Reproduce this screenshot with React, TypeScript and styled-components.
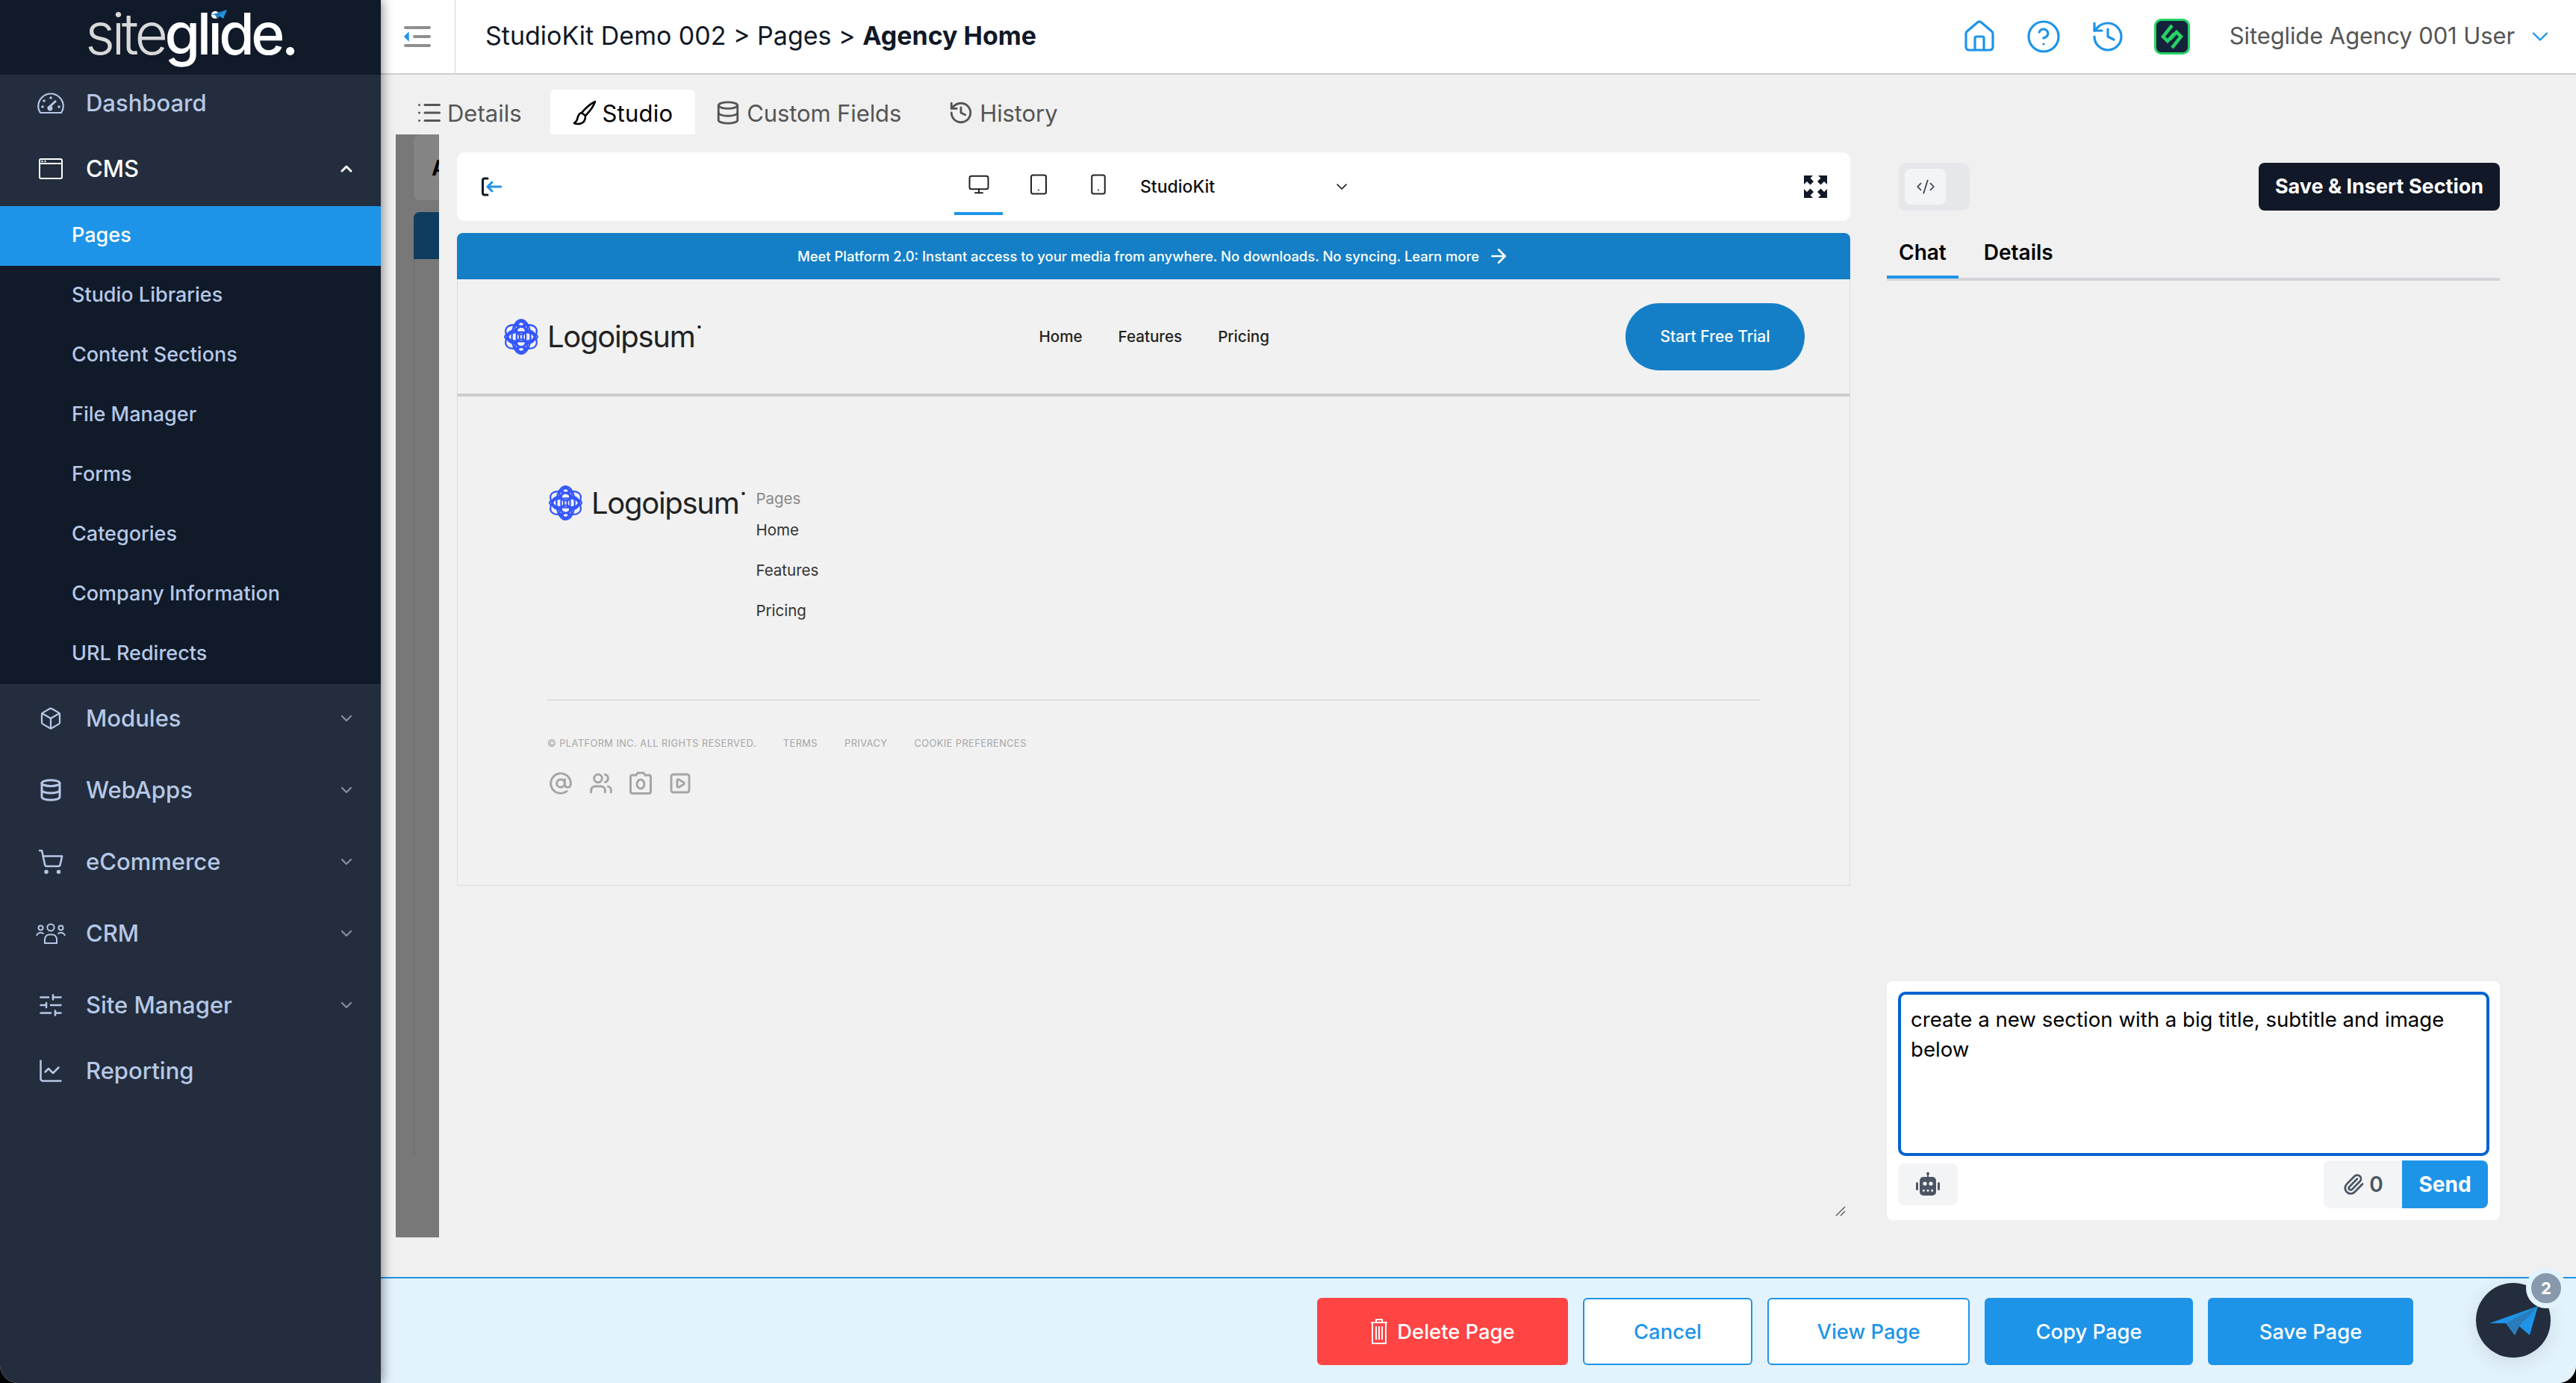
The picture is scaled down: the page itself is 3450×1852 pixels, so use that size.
import React from 'react'
import styled, { createGlobalStyle } from 'styled-components'
import {
    ArrowRight, AtSign, Box, ChartLine, ChevronDown, ChevronUp, CircleHelp, CodeXml, Database,
    History, Home, List, Monitor, Paperclip, ShoppingCart, SlidersHorizontal,
    Smartphone, SquarePlay, Tablet, Users
} from 'lucide-react'

const FONT = `Inter, "Liberation Sans", sans-serif`

const GlobalStyle = createGlobalStyle`
    html, body {
        margin: 0;
        padding: 0;
        background: #000;
    }
    * {
        box-sizing: border-box;
    }
`

const GaugeIcon = () => (
    <svg width="36" height="28" viewBox="0 0 36 28" fill="none" stroke="currentColor" strokeWidth="2.2">
        <path d="M4 27C2 24 1.2 21.5 1.2 18.5C1.2 9 8.8 1.5 18 1.5C27.2 1.5 34.8 9 34.8 18.5C34.8 21.5 34 24 32 27Z" />
        <path d="M14 21L25 11" strokeWidth="3" />
        <circle cx="17" cy="21" r="3.4" fill="currentColor" stroke="none" />
        <g fill="currentColor" stroke="none">
            <circle cx="18" cy="7" r="1.8" />
            <circle cx="9" cy="11" r="1.8" />
            <circle cx="7" cy="19" r="1.8" />
            <circle cx="29" cy="19" r="1.8" />
        </g>
    </svg>
)

const WindowIcon = () => (
    <svg width="32" height="28" viewBox="0 0 32 28" fill="none" stroke="currentColor" strokeWidth="2">
        <rect x="1" y="1" width="30" height="26" rx="2" />
        <path d="M1 7H31" />
        <circle cx="4.5" cy="4" r="1.2" fill="currentColor" stroke="none" />
        <circle cx="8.5" cy="4" r="1.2" fill="currentColor" stroke="none" />
    </svg>
)

const TeamIcon = () => (
    <svg width="40" height="28" viewBox="0 0 40 28" fill="none" stroke="currentColor" strokeWidth="2">
        <circle cx="20" cy="6" r="4.6" />
        <circle cx="6.5" cy="6.5" r="3" />
        <circle cx="33.5" cy="6.5" r="3" />
        <path d="M12 27V22C12 18 15 15.5 18 15.5H22C25 15.5 28 18 28 22V27Z" />
        <path d="M1 17C2 14 4 13 6.5 13C8 13 9.5 13.5 10.5 14.5" />
        <path d="M39 17C38 14 36 13 33.5 13C32 13 30.5 13.5 29.5 14.5" />
    </svg>
)

const BrushIcon = () => (
    <svg width="32" height="34" viewBox="0 0 32 34" fill="none" stroke="currentColor" strokeWidth="2.6" strokeLinejoin="round">
        <path d="M30 2C28 8 22 16 17 21L12 17C17 11 24 5 30 2Z" />
        <path d="M12 17C7 18 7 23 6 26C5 29 3 30 2 31C7 33 14 32 16 27C17 25 17 23 17 21" />
    </svg>
)

const CameraIcon = () => (
    <svg width="30" height="32" viewBox="0 0 30 32" fill="none" stroke="currentColor" strokeWidth="3">
        <path d="M9 5L11 2H19L21 5H26C27.5 5 28.5 6 28.5 7.5V27C28.5 28.5 27.5 29.5 26 29.5H4C2.5 29.5 1.5 28.5 1.5 27V7.5C1.5 6 2.5 5 4 5Z" />
        <ellipse cx="15" cy="17" rx="5" ry="6" />
    </svg>
)

const TrashIcon = () => (
    <svg width="24" height="36" viewBox="0 0 24 36" fill="none" stroke="currentColor" strokeWidth="2">
        <path d="M1 6H23M8 6V2H16V6" />
        <path d="M3 6V34H21V6" />
        <path d="M8 11V29M12 11V29M16 11V29" />
    </svg>
)

const RobotIcon = () => (
    <svg width="34" height="34" viewBox="0 0 34 34" fill="#4b5563">
        <rect x="16" y="1" width="2" height="6" />
        <circle cx="17" cy="2.5" r="2" />
        <rect x="6" y="7" width="22" height="25" rx="5" />
        <rect x="1" y="14" width="3" height="11" rx="1.5" />
        <rect x="30" y="14" width="3" height="11" rx="1.5" />
        <circle cx="13" cy="16" r="2.6" fill="#f3f4f6" />
        <circle cx="21" cy="16" r="2.6" fill="#f3f4f6" />
        <g fill="#f3f4f6">
            <rect x="10" y="24" width="2.6" height="2.6" />
            <rect x="15.7" y="24" width="2.6" height="2.6" />
            <rect x="21.4" y="24" width="2.6" height="2.6" />
        </g>
    </svg>
)

const SiteglideLogo = () => (
    <LogoWrap>
        <LogoLight>site</LogoLight>
        <LogoBold>glide.</LogoBold>
        <LogoPlane width="22" height="14" viewBox="0 0 22 14">
            <polygon points="22,0 0,7 6,7 9,12 11,8 17,12" fill="#1e94e8" />
            <polygon points="22,0 6,7 9,12 11,8" fill="#2a7cba" />
        </LogoPlane>
    </LogoWrap>
)

const LogoMark: React.FunctionComponent<{ size: number }> = ({ size }) => (
    <svg width={size} height={size} viewBox="0 0 48 48" fill="none" stroke="#3355ff" strokeWidth="2.2">
        {[0, 60, 120].map(a => (
            <ellipse key={a} cx="24" cy="24" rx="22" ry="12" transform={`rotate(${a + 30} 24 24)`} />
        ))}
        {[0, 90].map(a => (
            <ellipse key={a} cx="24" cy="24" rx="21" ry="6" transform={`rotate(${a} 24 24)`} />
        ))}
        <circle cx="24" cy="13" r="8" />
        <circle cx="24" cy="35" r="8" />
        <circle cx="14" cy="24" r="8" />
        <circle cx="34" cy="24" r="8" />
    </svg>
)

const Logoipsum: React.FunctionComponent<{ small?: boolean }> = ({ small }) => (
    <LogoRow>
        <LogoMark size={small ? 49 : 50} />
        <LogoWord>Logoipsum<LogoDot>•</LogoDot></LogoWord>
    </LogoRow>
)

const ExitIcon = () => (
    <svg width="28" height="26" viewBox="0 0 28 26" fill="none" strokeWidth="3" strokeLinecap="round">
        <path d="M9 2H5C3.4 2 2.5 3 2.5 4.5V21.5C2.5 23 3.4 24 5 24H9" stroke="#111827" />
        <path d="M27 13H9M15 7L9 13L15 19" stroke="#1e94e8" />
    </svg>
)

const ExpandIcon = () => (
    <svg width="31" height="30" viewBox="0 0 31 30" fill="#111827">
        <path d="M0 0H12L8.5 3.5L13 8L8.5 12.5L4 8L0 12Z" />
        <path d="M31 0H19L22.5 3.5L18 8L22.5 12.5L27 8L31 12Z" />
        <path d="M0 30H12L8.5 26.5L13 22L8.5 17.5L4 22L0 18Z" />
        <path d="M31 30H19L22.5 26.5L18 22L22.5 17.5L27 22L31 18Z" />
    </svg>
)

const GreenAppIcon = () => (
    <svg width="48" height="48" viewBox="0 0 48 48" fill="none">
        <rect x="1.5" y="1.5" width="45" height="45" rx="8" fill="#15233a" stroke="#25d366" strokeWidth="3" />
        <path d="M24 9L12 24L18 30L27 20M24 39L36 24L30 18L21 28" stroke="#25d366" strokeWidth="4.5" />
    </svg>
)

const PaperPlane = () => (
    <svg width="65" height="39" viewBox="0 0 65 39">
        <polygon points="65,0 0,23 22,23 34,39 40,27 54,39" fill="#1e94e8" />
        <polygon points="65,0 22,23 34,39 40,27" fill="#2a7cba" />
    </svg>
)

const ResizeGrip = () => (
    <svg width="14" height="14" viewBox="0 0 14 14" stroke="#555" strokeWidth="1.4">
        <path d="M1 13L13 1M7 13L13 7" />
    </svg>
)

const NAV_TOP = [
    { label: 'Dashboard', icon: <GaugeIcon />, height: 76 },
    { label: 'CMS', icon: <WindowIcon />, height: 100, open: true }
]
const SUB_ITEMS = ['Pages', 'Studio Libraries', 'Content Sections', 'File Manager', 'Forms', 'Categories', 'Company Information', 'URL Redirects']
const NAV_BOTTOM = [
    { label: 'Modules', icon: <Box size={32} strokeWidth={1.7} />, height: 96, more: true },
    { label: 'WebApps', icon: <Database size={32} strokeWidth={2.2} />, height: 96, more: true },
    { label: 'eCommerce', icon: <ShoppingCart size={36} strokeWidth={1.7} />, height: 96, more: true },
    { label: 'CRM', icon: <TeamIcon />, height: 96, more: true },
    { label: 'Site Manager', icon: <SlidersHorizontal size={36} strokeWidth={1.7} />, height: 96, more: true },
    { label: 'Reporting', icon: <ChartLine size={36} strokeWidth={1.7} />, height: 80 }
]

const App: React.FunctionComponent = () => {
    return (
        <Page>
            <GlobalStyle />
            <Sidebar>
                <LogoBar>
                    <SiteglideLogo />
                </LogoBar>
                {NAV_TOP.map(item => (
                    <NavRow key={item.label} $height={item.height} $open={item.open}>
                        <NavIcon>{item.icon}</NavIcon>
                        <NavLabel>{item.label}</NavLabel>
                        {item.open && <NavChevron $open><ChevronUp size={24} strokeWidth={3} /></NavChevron>}
                    </NavRow>
                ))}
                <SubMenu>
                    {SUB_ITEMS.map((label, i) => (
                        <SubItem key={label} $active={i === 0}>{label}</SubItem>
                    ))}
                </SubMenu>
                <NavGroup>
                    {NAV_BOTTOM.map(item => (
                        <NavRow key={item.label} $height={item.height}>
                            <NavIcon>{item.icon}</NavIcon>
                            <NavLabel>{item.label}</NavLabel>
                            {item.more && <NavChevron><ChevronDown size={24} strokeWidth={2.2} /></NavChevron>}
                        </NavRow>
                    ))}
                </NavGroup>
            </Sidebar>

            <Main>
                <Header>
                    <MenuToggle>
                        <svg width="36" height="30" viewBox="0 0 36 30" fill="none" strokeWidth="4" strokeLinecap="round">
                            <path d="M2 3H34M14 15H34M2 27H34" stroke="#8f8f8f" />
                            <path d="M6 10L1 15L6 20Z" fill="#1e94e8" stroke="#1e94e8" strokeWidth="1.5" />
                        </svg>
                    </MenuToggle>
                    <Breadcrumb>StudioKit Demo 002 &gt; Pages &gt; <strong>Agency Home</strong></Breadcrumb>
                    <HeaderActions>
                        <HeaderIcon><Home size={48} strokeWidth={1.6} /></HeaderIcon>
                        <HeaderIcon><CircleHelp size={48} strokeWidth={1.6} /></HeaderIcon>
                        <HeaderIcon><History size={48} strokeWidth={1.6} /></HeaderIcon>
                        <GreenAppIcon />
                        <UserName>Siteglide Agency 001 User</UserName>
                        <HeaderIcon><ChevronDown size={36} strokeWidth={1.6} /></HeaderIcon>
                    </HeaderActions>
                </Header>

                <TabsRow>
                    <PageTab><List size={36} strokeWidth={2} />Details</PageTab>
                    <PageTab $active><BrushIcon />Studio</PageTab>
                    <PageTab><Database size={34} strokeWidth={2} />Custom Fields</PageTab>
                    <PageTab><History size={34} strokeWidth={2} />History</PageTab>
                </TabsRow>

                <Workspace>
                    <BehindStrip>
                        <BehindCard><BehindLetter>A</BehindLetter></BehindCard>
                        <BehindBanner />
                        <BehindBody />
                    </BehindStrip>

                    <CenterColumn>
                        <Toolbar>
                            <ExitIcon />
                            <DeviceGroup>
                                <DeviceTab $active><Monitor size={30} strokeWidth={1.6} /></DeviceTab>
                                <DeviceTab><Tablet size={30} strokeWidth={1.6} /></DeviceTab>
                                <DeviceTab><Smartphone size={30} strokeWidth={1.6} /></DeviceTab>
                            </DeviceGroup>
                            <ThemeSelect>
                                StudioKit
                                <ChevronDown size={24} strokeWidth={1.6} />
                            </ThemeSelect>
                            <ExpandWrap><ExpandIcon /></ExpandWrap>
                        </Toolbar>

                        <Preview>
                            <Banner>
                                Meet Platform 2.0: Instant access to your media from anywhere. No downloads. No syncing. Learn more
                                <ArrowRight size={30} strokeWidth={2} />
                            </Banner>
                            <PreviewNav>
                                <Logoipsum />
                                <PreviewLinks>
                                    <PreviewLink>Home</PreviewLink>
                                    <PreviewLink>Features</PreviewLink>
                                    <PreviewLink>Pricing</PreviewLink>
                                </PreviewLinks>
                                <TrialButton>Start Free Trial</TrialButton>
                            </PreviewNav>
                            <PreviewFooter>
                                <FooterTop>
                                    <Logoipsum small />
                                    <FooterLinks>
                                        <FooterHeading>Pages</FooterHeading>
                                        <FooterLink>Home</FooterLink>
                                        <FooterLink>Features</FooterLink>
                                        <FooterLink>Pricing</FooterLink>
                                    </FooterLinks>
                                </FooterTop>
                                <FooterRule />
                                <LegalRow>
                                    <span>© PLATFORM INC. ALL RIGHTS RESERVED.</span>
                                    <span>TERMS</span>
                                    <span>PRIVACY</span>
                                    <span>COOKIE PREFERENCES</span>
                                </LegalRow>
                                <SocialRow>
                                    <AtSign size={32} strokeWidth={2.2} />
                                    <Users size={32} strokeWidth={2.2} />
                                    <CameraIcon />
                                    <SquarePlay size={32} strokeWidth={2.2} />
                                </SocialRow>
                            </PreviewFooter>
                        </Preview>
                        <GripRow><ResizeGrip /></GripRow>
                    </CenterColumn>

                    <RightPanel>
                        <PanelTop>
                            <CodeToggle>
                                <CodeButton><CodeXml size={26} strokeWidth={1.6} /></CodeButton>
                            </CodeToggle>
                            <SaveInsert>Save &amp; Insert Section</SaveInsert>
                        </PanelTop>
                        <PanelTabs>
                            <PanelTab $active>Chat</PanelTab>
                            <PanelTab>Details</PanelTab>
                        </PanelTabs>
                        <ChatBox>
                            <Prompt>create a new section with a big title, subtitle and image below</Prompt>
                            <ChatActions>
                                <RobotButton><RobotIcon /></RobotButton>
                                <SendGroup>
                                    <AttachButton><Paperclip size={30} strokeWidth={2.2} />0</AttachButton>
                                    <SendButton>Send</SendButton>
                                </SendGroup>
                            </ChatActions>
                        </ChatBox>
                    </RightPanel>
                </Workspace>

                <FooterBar>
                    <ActionButton $kind="danger"><TrashIcon />Delete Page</ActionButton>
                    <ActionButton $kind="outline" $width={227}>Cancel</ActionButton>
                    <ActionButton $kind="outline" $width={271}>View Page</ActionButton>
                    <ActionButton $kind="primary" $width={279}>Copy Page</ActionButton>
                    <ActionButton $kind="primary" $width={275}>Save Page</ActionButton>
                </FooterBar>
                <ChatLauncher>
                    <PaperPlane />
                    <LauncherBadge>2</LauncherBadge>
                </ChatLauncher>
            </Main>
        </Page>
    )
}

export default App

const Page = styled.div`
    position: relative;
    display: flex;
    width: 3450px;
    height: 1852px;
    overflow: hidden;
    border-radius: 0 0 24px 24px;
    background: #f0f0f0;
    font-family: ${FONT};
`
const Sidebar = styled.aside`
    position: relative;
    z-index: 2;
    flex: 0 0 510px;
    display: flex;
    flex-direction: column;
    background: #232d3d;
    box-shadow: 2px 0 14px rgba(0, 0, 0, 0.45);
`
const LogoBar = styled.div`
    height: 100px;
    background: #101a29;
    display: flex;
    align-items: center;
    justify-content: center;
`
const LogoWrap = styled.div`
    position: relative;
    display: flex;
    align-items: baseline;
    font-size: 77px;
    letter-spacing: -4.6px;
    line-height: 80px;
    margin-top: -10px;
`
const LogoLight = styled.span`
    font-weight: 300;
    color: #d8d8d8;
`
const LogoBold = styled.span`
    font-weight: 500;
    color: #ffffff;
`
const LogoPlane = styled.svg`
    position: absolute;
    left: 168px;
    top: 8px;
`
const NavRow = styled.div<{ $height: number; $open?: boolean }>`
    height: ${p => p.$height}px;
    display: flex;
    align-items: center;
    padding: 0 34px 0 48px;
    color: ${p => (p.$open ? '#ffffff' : '#b6c8e6')};
`
const NavIcon = styled.div`
    width: 40px;
    display: flex;
    justify-content: center;
    color: inherit;
`
const NavLabel = styled.div`
    margin-left: 27px;
    padding-bottom: 2px;
    font-size: 31px;
    font-weight: 500;
`
const NavChevron = styled.div<{ $open?: boolean }>`
    margin-left: auto;
    display: flex;
    color: ${p => (p.$open ? '#ffffff' : '#8a8f99')};
`
const SubMenu = styled.div`
    background: #101a29;
`
const SubItem = styled.div<{ $active?: boolean }>`
    height: 80px;
    display: flex;
    align-items: center;
    padding: 0 0 3px 96px;
    font-size: 27px;
    font-weight: 500;
    color: ${p => (p.$active ? '#ffffff' : '#b6c8e6')};
    background: ${p => (p.$active ? '#1e94e8' : 'transparent')};
`
const NavGroup = styled.div`
    display: flex;
    flex-direction: column;
    margin-top: -2px;
`
const Main = styled.main`
    position: relative;
    flex: 1;
    min-width: 0;
    display: flex;
    flex-direction: column;
`
const Header = styled.header`
    height: 100px;
    flex: none;
    display: flex;
    align-items: center;
    background: #fff;
    border-bottom: 2px solid #cfcfcf;
`
const MenuToggle = styled.div`
    width: 100px;
    height: 98px;
    display: flex;
    align-items: center;
    justify-content: center;
    border-right: 1px solid #d4d4d4;
    padding-right: 2px;
`
const Breadcrumb = styled.div`
    margin-left: 40px;
    padding-bottom: 3px;
    font-size: 34px;
    font-weight: 400;
    color: #111827;
    white-space: nowrap;
    strong {
        font-weight: 700;
    }
`
const HeaderActions = styled.div`
    margin-left: auto;
    display: flex;
    align-items: center;
    gap: 38px;
    padding-right: 30px;
`
const HeaderIcon = styled.div`
    display: flex;
    color: #1e94e8;
`
const UserName = styled.div`
    margin: 0 -22px 0 15px;
    padding-bottom: 3px;
    font-size: 31px;
    letter-spacing: -0.1px;
    color: #555;
    white-space: nowrap;
`
const TabsRow = styled.div`
    height: 80px;
    flex: none;
    display: flex;
    align-items: flex-end;
    padding-left: 48px;
`
const PageTab = styled.div<{ $active?: boolean }>`
    height: 60px;
    display: flex;
    align-items: center;
    gap: 8px;
    padding: 2px ${p => (p.$active ? 30 : 32)}px 0;
    margin: 0 ${p => (p.$active ? -4 : 0)}px 0 ${p => (p.$active ? 0 : -1)}px;
    font-size: 31px;
    letter-spacing: ${p => (p.$active ? 0.2 : -0.1)}px;
    color: ${p => (p.$active ? '#000' : '#555')};
    background: ${p => (p.$active ? '#fff' : 'transparent')};
    border-radius: 6px 6px 0 0;
    &:first-child {
        gap: 6px;
        padding-left: 0;
        padding-right: 38px;
        letter-spacing: 0;
    }
`
const Workspace = styled.div`
    flex: 1;
    min-height: 0;
    display: flex;
    padding-left: 20px;
`
const BehindStrip = styled.div`
    flex: 0 0 58px;
    height: 1477px;
    padding-left: 24px;
    background: #787878;
    overflow: hidden;
`
const BehindCard = styled.div`
    height: 88px;
    background: #848484;
    border-radius: 8px 0 0 8px;
    padding: 28px 0 0 24px;
`
const BehindLetter = styled.span`
    font-size: 28px;
    font-weight: 700;
    color: #000;
`
const BehindBanner = styled.div`
    margin-top: 16px;
    height: 63px;
    background: #0f3d5f;
    border-radius: 8px 0 0 0;
`
const BehindBody = styled.div`
    height: 1200px;
    border-left: 1px solid #6a6a6a;
`
const CenterColumn = styled.div`
    flex: 0 0 1866px;
    margin-left: 24px;
    height: 1477px;
    padding-top: 24px;
    display: flex;
    flex-direction: column;
`
const Toolbar = styled.div`
    position: relative;
    height: 92px;
    flex: none;
    display: flex;
    align-items: center;
    padding-left: 32px;
    background: #fff;
    border-radius: 10px;
`
const DeviceGroup = styled.div`
    display: flex;
    align-items: stretch;
    gap: 15px;
    height: 100%;
    margin-left: 606px;
`
const DeviceTab = styled.div<{ $active?: boolean }>`
    width: 65px;
    display: flex;
    align-items: center;
    justify-content: center;
    color: #222;
    border-bottom: 4px solid ${p => (p.$active ? '#1e94e8' : 'transparent')};
    padding-top: 6px;
    margin-bottom: 8px;
`
const ThemeSelect = styled.div`
    width: 282px;
    margin-left: 24px;
    display: flex;
    align-items: center;
    justify-content: space-between;
    font-size: 23px;
    font-weight: 500;
    color: #111;
`
const ExpandWrap = styled.div`
    margin-left: auto;
    margin-right: 31px;
    display: flex;
`
const Preview = styled.div`
    margin-top: 16px;
    height: 874px;
    flex: none;
    display: flex;
    flex-direction: column;
    background: #f1f1f1;
    border: 1px solid #dcdcdc;
    border-top: none;
    border-radius: 8px 8px 0 0;
`
const Banner = styled.div`
    height: 62px;
    flex: none;
    display: flex;
    align-items: center;
    justify-content: center;
    gap: 11px;
    margin: 0 -1px;
    background: #147fc7;
    color: #fff;
    font-size: 18.4px;
    font-weight: 500;
    border-radius: 8px 8px 0 0;
`
const PreviewNav = styled.div`
    position: relative;
    height: 157px;
    flex: none;
    display: flex;
    align-items: center;
    justify-content: space-between;
    padding: 0 60px;
    border-bottom: 4px solid #cccccc;
`
const LogoRow = styled.div`
    display: flex;
    align-items: center;
    gap: 10px;
`
const LogoWord = styled.div`
    position: relative;
    font-size: 40px;
    font-weight: 400;
    letter-spacing: -1.3px;
    color: #222;
`
const LogoDot = styled.span`
    position: absolute;
    font-size: 14px;
    top: 2px;
    margin-left: 2px;
`
const PreviewLinks = styled.div`
    display: flex;
    gap: 48px;
    margin-left: -16px;
`
const PreviewLink = styled.div`
    font-size: 20.6px;
    font-weight: 500;
    color: #222;
`
const TrialButton = styled.div`
    width: 240px;
    height: 90px;
    display: flex;
    align-items: center;
    justify-content: center;
    border-radius: 45px;
    background: #147fc7;
    color: #fff;
    font-size: 21px;
    font-weight: 500;
`
const PreviewFooter = styled.div`
    padding: 118px 120px 0;
`
const FooterTop = styled.div`
    display: flex;
    align-items: flex-start;
    height: 288px;
    gap: 23px;
`
const FooterLinks = styled.div`
    display: flex;
    flex-direction: column;
    margin-top: 7px;
`
const FooterHeading = styled.div`
    font-size: 20.5px;
    line-height: 24px;
    color: #888;
`
const FooterLink = styled.div`
    font-size: 20.5px;
    line-height: 24px;
    color: #333;
    margin-top: 30px;
    &:nth-child(2) {
        margin-top: 18px;
    }
`
const FooterRule = styled.div`
    height: 1px;
    background: #cfcfcf;
`
const LegalRow = styled.div`
    margin-top: 50px;
    display: flex;
    gap: 36px;
    font-size: 12.8px;
    line-height: 16px;
    letter-spacing: 0.45px;
    color: #a5a5a5;
`
const SocialRow = styled.div`
    margin-top: 29px;
    margin-left: 2px;
    display: flex;
    gap: 22px;
    color: #a5a5a5;
`
const GripRow = styled.div`
    margin-top: auto;
    margin-bottom: 28px;
    margin-right: 6px;
    align-self: flex-end;
    display: flex;
`
const RightPanel = styled.div`
    flex: 0 0 821px;
    margin-left: 49px;
    height: 1477px;
    padding-top: 38px;
    display: flex;
    flex-direction: column;
`
const PanelTop = styled.div`
    height: 64px;
    flex: none;
    display: flex;
    align-items: center;
    justify-content: space-between;
    padding-left: 16px;
`
const CodeToggle = styled.div`
    width: 95px;
    height: 64px;
    padding: 8px;
    background: #e5e7eb;
    border-radius: 10px;
`
const CodeButton = styled.div`
    width: 55px;
    height: 48px;
    display: flex;
    align-items: center;
    justify-content: center;
    background: #f3f4f6;
    border-radius: 8px;
    color: #374151;
`
const SaveInsert = styled.div`
    width: 323px;
    height: 64px;
    display: flex;
    align-items: center;
    justify-content: center;
    padding-bottom: 2px;
    background: #111827;
    border-radius: 8px;
    color: #fff;
    font-size: 27px;
    font-weight: 700;
`
const PanelTabs = styled.div`
    height: 94px;
    flex: none;
    display: flex;
    align-items: flex-end;
    gap: 32px;
    border-bottom: 4px solid #d1d5db;
`
const PanelTab = styled.div<{ $active?: boolean }>`
    height: 62px;
    padding: 10px 16px 0;
    margin-bottom: -1px;
    font-size: 28px;
    font-weight: 600;
    color: #000;
    border-bottom: 4px solid ${p => (p.$active ? '#1e94e8' : 'transparent')};
    margin-left: ${p => (p.$active ? 0 : -14)}px;
`
const ChatBox = styled.div`
    margin-top: auto;
    margin-bottom: 23px;
    height: 320px;
    flex: none;
    padding: 14px 14px 0 15px;
    background: #fff;
    border-radius: 8px;
`
const Prompt = styled.div`
    height: 220px;
    padding: 13px 13px;
    border: 4px solid #0563d0;
    border-radius: 10px;
    font-size: 27.6px;
    line-height: 40px;
    color: #000;
`
const ChatActions = styled.div`
    margin-top: 6px;
    display: flex;
    align-items: center;
    justify-content: space-between;
`
const RobotButton = styled.div`
    width: 80px;
    height: 56px;
    display: flex;
    align-items: center;
    justify-content: center;
    background: #f3f4f6;
    border-radius: 8px;
    color: #4b5563;
`
const SendGroup = styled.div`
    display: flex;
    height: 64px;
    margin-right: 2px;
`
const AttachButton = styled.div`
    width: 105px;
    display: flex;
    align-items: center;
    justify-content: center;
    gap: 6px;
    background: #f3f4f6;
    border-radius: 8px 0 0 8px;
    color: #4b5563;
    font-size: 28px;
    font-weight: 600;
`
const SendButton = styled.div`
    width: 115px;
    display: flex;
    align-items: center;
    justify-content: center;
    background: #1e94e8;
    border-radius: 0 8px 8px 0;
    color: #fff;
    font-size: 28px;
    font-weight: 700;
`
const FooterBar = styled.footer`
    height: 142px;
    flex: none;
    display: flex;
    align-items: center;
    gap: 20px;
    padding: 2px 0 0 1254px;
    background: #e3f3fd;
    border-top: 2px solid #1e94e8;
`
const ACTION_COLORS = {
    danger: { bg: '#ff4444', fg: '#fff', border: '#ff4444' },
    outline: { bg: '#fff', fg: '#1e94e8', border: '#1e94e8' },
    primary: { bg: '#1e94e8', fg: '#fff', border: '#1e94e8' }
}
const ActionButton = styled.div<{ $kind: keyof typeof ACTION_COLORS; $width?: number }>`
    width: ${p => p.$width || 336}px;
    height: 90px;
    display: flex;
    align-items: center;
    justify-content: center;
    gap: 12px;
    border-radius: 6px;
    font-size: 27.4px;
    font-weight: 500;
    background: ${p => ACTION_COLORS[p.$kind].bg};
    color: ${p => ACTION_COLORS[p.$kind].fg};
    border: 2px solid ${p => ACTION_COLORS[p.$kind].border};
`
const ChatLauncher = styled.div`
    position: absolute;
    right: 34px;
    bottom: 34px;
    width: 100px;
    height: 100px;
    display: flex;
    align-items: center;
    justify-content: center;
    border-radius: 50%;
    background: #232d3d;
    box-shadow: 0 6px 24px rgba(35, 45, 61, 0.12);
`
const LauncherBadge = styled.div`
    position: absolute;
    top: -20px;
    right: -21px;
    width: 54px;
    height: 54px;
    display: flex;
    align-items: center;
    justify-content: center;
    border: 7px solid #e3f3fd;
    border-radius: 50%;
    background: #8899ae;
    color: #fff;
    font-size: 22px;
    font-weight: 700;
`
